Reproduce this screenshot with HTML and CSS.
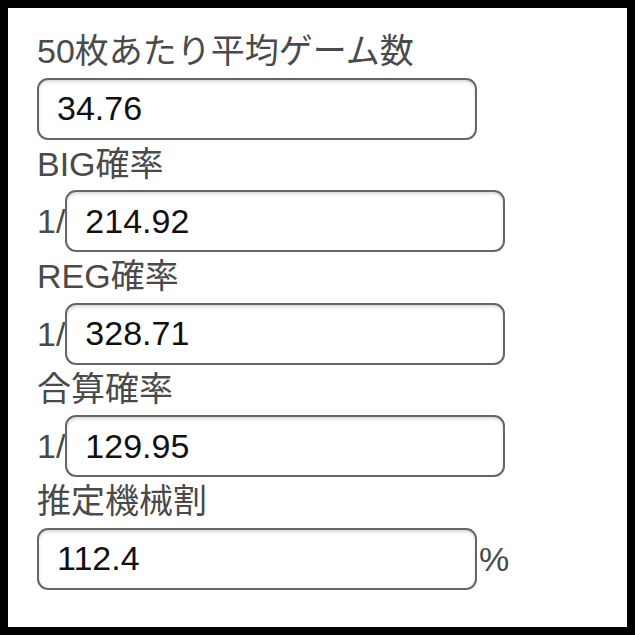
FILE: index.html
```html
<!DOCTYPE html>
<html lang="ja">
<head>
<meta charset="utf-8">
<title>機械割計算</title>
<link rel="stylesheet" href="styles.css">
</head>
<body>
<div class="frame">
  <form class="calc">
    <div class="field">
      <label class="label">50枚あたり平均ゲーム数</label>
      <div class="row"><input class="box" type="text" value="34.76"></div>
    </div>
    <div class="field">
      <label class="label">BIG確率</label>
      <div class="row"><span class="affix">1/</span><input class="box" type="text" value="214.92"></div>
    </div>
    <div class="field">
      <label class="label">REG確率</label>
      <div class="row"><span class="affix">1/</span><input class="box" type="text" value="328.71"></div>
    </div>
    <div class="field">
      <label class="label">合算確率</label>
      <div class="row"><span class="affix">1/</span><input class="box" type="text" value="129.95"></div>
    </div>
    <div class="field">
      <label class="label">推定機械割</label>
      <div class="row"><input class="box" type="text" value="112.4"><span class="affix suffix">%</span></div>
    </div>
  </form>
</div>
</body>
</html>
```

FILE: styles.css
```css
html, body {
  margin: 0;
  padding: 0;
  background: #000;
}

.frame {
  margin: 8px;
  width: 619px;
  height: 619px;
  background: #fff;
  box-sizing: border-box;
  padding: 23px 0 0 29px;
  font-family: "Liberation Sans", "Noto Sans CJK JP", sans-serif;
}

.calc {
  margin: 0;
}

.field {
  margin-top: 4px;
}

.field:first-child {
  margin-top: 0;
}

.label {
  display: block;
  font-size: 34px;
  line-height: 40px;
  color: #4a4a4a;
}

.row {
  display: flex;
  align-items: center;
  margin-top: 6.5px;
}

.affix {
  font-size: 34px;
  line-height: 40px;
  color: #4a4a4a;
}

.suffix {
  margin-left: 2px;
}

.box {
  width: 440px;
  height: 62px;
  box-sizing: border-box;
  margin: 0;
  border: 2px solid #666;
  border-radius: 11px;
  padding: 0 18px;
  background: #fff;
  box-shadow: inset 0 2px 3px rgba(0, 0, 0, 0.14);
  font-family: "Liberation Sans", sans-serif;
  font-size: 34px;
  color: #111;
  outline: none;
}
```
